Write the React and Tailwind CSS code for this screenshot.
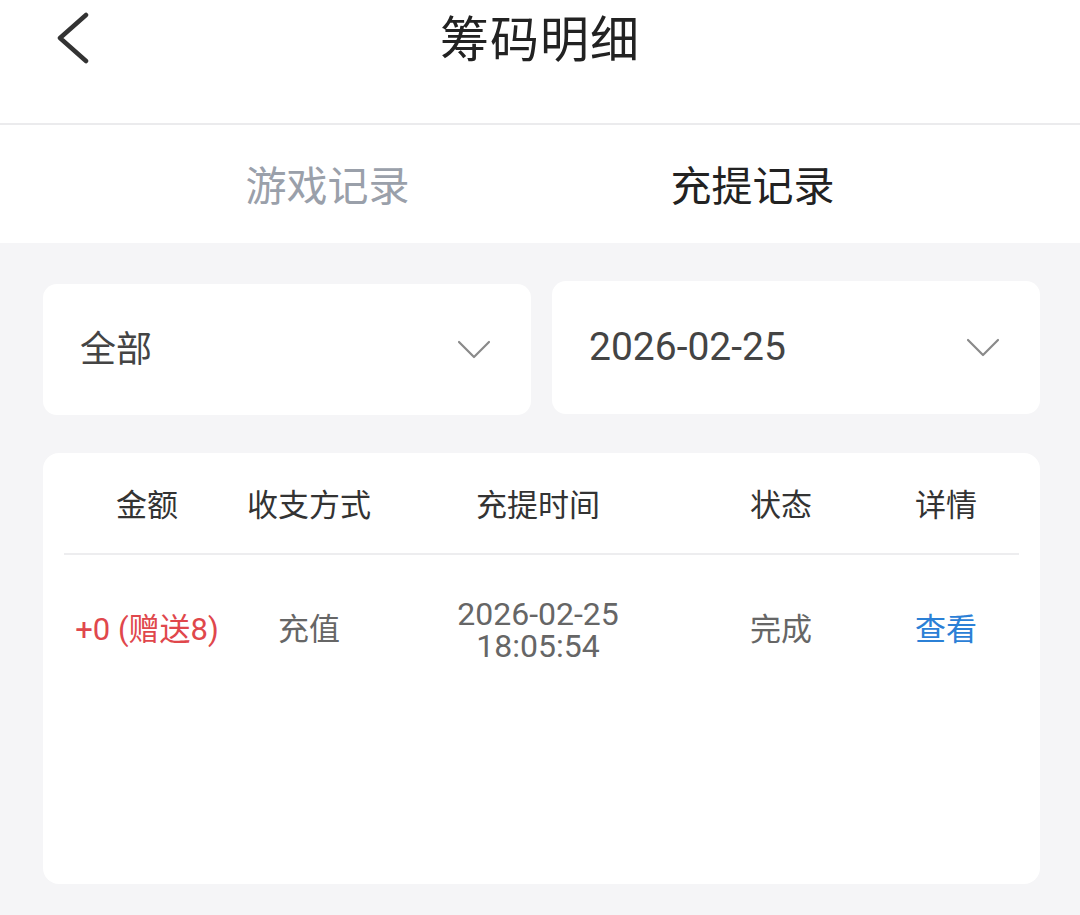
import React from "react";

const font = { fontFamily: 'Roboto, "Noto Sans CJK SC", sans-serif' };

function Chevron() {
  return (
    <svg width="34" height="20" viewBox="0 0 34 20" fill="none">
      <path d="M2 2 L17 17 L32 2" stroke="#8a8a8a" strokeWidth="2.2" strokeLinecap="round" strokeLinejoin="round" />
    </svg>
  );
}

export default function App() {
  return (
    <div className="w-[1080px] h-[915px] bg-[#f5f5f7] flex flex-col overflow-hidden" style={font}>
      <div className="h-[123px] bg-white relative flex items-start justify-center">
        <div className="absolute left-[55px] top-[12px]">
          <svg width="36" height="52" viewBox="0 0 36 52" fill="none">
            <path d="M31 3 L5 26 L31 49" stroke="#333" strokeWidth="4.5" strokeLinecap="round" strokeLinejoin="round" />
          </svg>
        </div>
        <div className="text-[49px] leading-none text-[#222] mt-[16px] tracking-[1px]">筹码明细</div>
      </div>
      <div className="h-[2px] bg-[#ebebed]" />
      <div className="h-[118px] bg-white flex px-[115px] pt-[8px]">
        <div className="flex-1 flex items-center justify-center text-[41px] text-[#9aa0aa]">游戏记录</div>
        <div className="flex-1 flex items-center justify-center text-[41px] text-[#222]">充提记录</div>
      </div>
      <div className="flex gap-[21px] pl-[43px] pr-[40px] mt-[38px]">
        <div className="w-[488px] shrink-0 h-[131px] bg-white rounded-[14px] flex items-center justify-between pl-[37px] pr-[40px] mt-[3px]">
          <span className="text-[36px] text-[#444]">全部</span>
          <Chevron />
        </div>
        <div className="w-[488px] shrink-0 h-[133px] bg-white rounded-[14px] flex items-center justify-between pl-[37px] pr-[40px]">
          <span className="text-[39px] text-[#444]">2026-02-25</span>
          <Chevron />
        </div>
      </div>
      <div className="ml-[43px] mr-[40px] mt-[38px] h-[431px] bg-white rounded-[16px] px-[21px]">
        <div className="grid grid-cols-[166px_158px_300px_186px_144px] h-[102px] items-center text-[31px] text-[#333] border-b-2 border-[#ededef] pt-[6px]">
          <div className="text-center">金额</div>
          <div className="text-center">收支方式</div>
          <div className="text-center">充提时间</div>
          <div className="text-center">状态</div>
          <div className="text-center">详情</div>
        </div>
        <div className="grid grid-cols-[166px_158px_300px_186px_144px] h-[150px] items-center text-[31px] text-[#666]">
          <div className="text-center text-[#e0474c] whitespace-nowrap">+0 (赠送8)</div>
          <div className="text-center">充值</div>
          <div className="text-center text-[32px] leading-[32px]">
            <div>2026-02-25</div>
            <div>18:05:54</div>
          </div>
          <div className="text-center">完成</div>
          <div className="text-center text-[#2b80d6]">查看</div>
        </div>
      </div>
    </div>
  );
}
